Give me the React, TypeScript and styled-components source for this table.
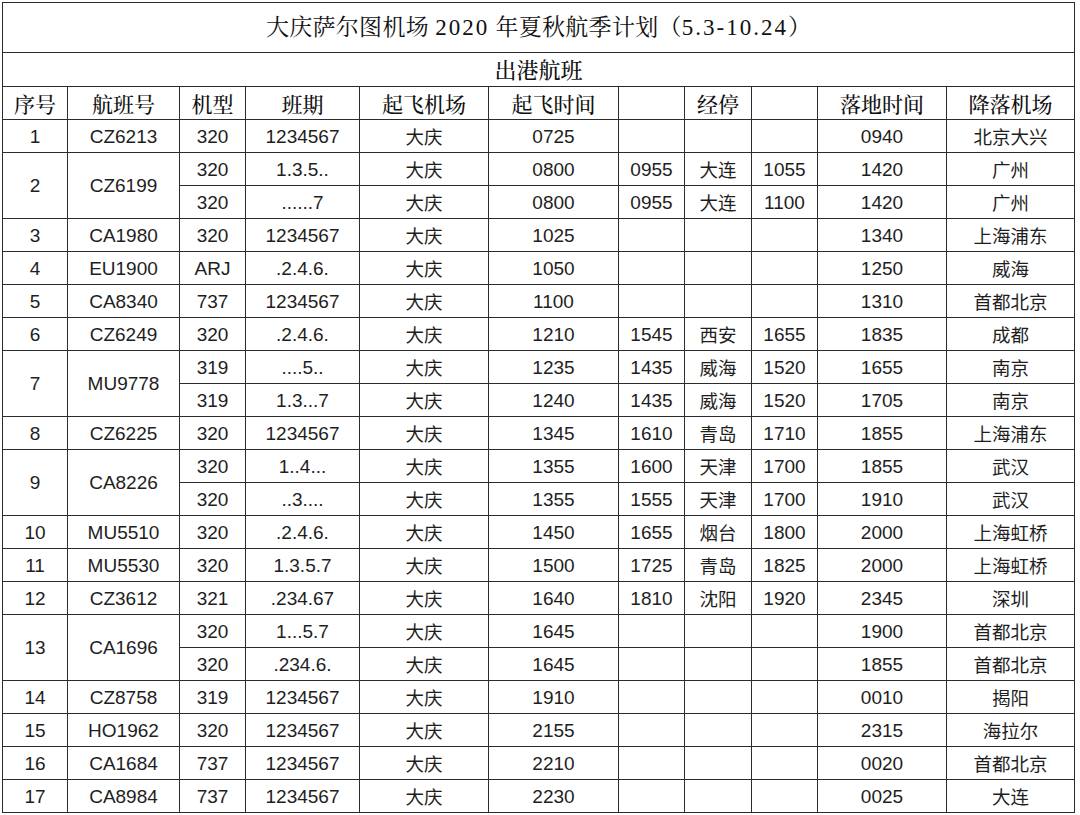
import * as React from 'react';
import styled, { createGlobalStyle } from 'styled-components';

type Leg = [string, string, string, string, string, string, string, string, string];

type Flight = {
  no: number;
  code: string;
  legs: Leg[];
};

const flights: Flight[] = [
  { no: 1, code: 'CZ6213', legs: [['320', '1234567', '大庆', '0725', '', '', '', '0940', '北京大兴']] },
  {
    no: 2,
    code: 'CZ6199',
    legs: [
      ['320', '1.3.5..', '大庆', '0800', '0955', '大连', '1055', '1420', '广州'],
      ['320', '......7', '大庆', '0800', '0955', '大连', '1100', '1420', '广州'],
    ],
  },
  { no: 3, code: 'CA1980', legs: [['320', '1234567', '大庆', '1025', '', '', '', '1340', '上海浦东']] },
  { no: 4, code: 'EU1900', legs: [['ARJ', '.2.4.6.', '大庆', '1050', '', '', '', '1250', '威海']] },
  { no: 5, code: 'CA8340', legs: [['737', '1234567', '大庆', '1100', '', '', '', '1310', '首都北京']] },
  { no: 6, code: 'CZ6249', legs: [['320', '.2.4.6.', '大庆', '1210', '1545', '西安', '1655', '1835', '成都']] },
  {
    no: 7,
    code: 'MU9778',
    legs: [
      ['319', '....5..', '大庆', '1235', '1435', '威海', '1520', '1655', '南京'],
      ['319', '1.3...7', '大庆', '1240', '1435', '威海', '1520', '1705', '南京'],
    ],
  },
  { no: 8, code: 'CZ6225', legs: [['320', '1234567', '大庆', '1345', '1610', '青岛', '1710', '1855', '上海浦东']] },
  {
    no: 9,
    code: 'CA8226',
    legs: [
      ['320', '1..4...', '大庆', '1355', '1600', '天津', '1700', '1855', '武汉'],
      ['320', '..3....', '大庆', '1355', '1555', '天津', '1700', '1910', '武汉'],
    ],
  },
  { no: 10, code: 'MU5510', legs: [['320', '.2.4.6.', '大庆', '1450', '1655', '烟台', '1800', '2000', '上海虹桥']] },
  { no: 11, code: 'MU5530', legs: [['320', '1.3.5.7', '大庆', '1500', '1725', '青岛', '1825', '2000', '上海虹桥']] },
  { no: 12, code: 'CZ3612', legs: [['321', '.234.67', '大庆', '1640', '1810', '沈阳', '1920', '2345', '深圳']] },
  {
    no: 13,
    code: 'CA1696',
    legs: [
      ['320', '1...5.7', '大庆', '1645', '', '', '', '1900', '首都北京'],
      ['320', '.234.6.', '大庆', '1645', '', '', '', '1855', '首都北京'],
    ],
  },
  { no: 14, code: 'CZ8758', legs: [['319', '1234567', '大庆', '1910', '', '', '', '0010', '揭阳']] },
  { no: 15, code: 'HO1962', legs: [['320', '1234567', '大庆', '2155', '', '', '', '2315', '海拉尔']] },
  { no: 16, code: 'CA1684', legs: [['737', '1234567', '大庆', '2210', '', '', '', '0020', '首都北京']] },
  { no: 17, code: 'CA8984', legs: [['737', '1234567', '大庆', '2230', '', '', '', '0025', '大连']] },
];

const columnWidths = [65, 112, 66, 114, 129, 130, 66, 67, 66, 129, 128];
const headings = ['序号', '航班号', '机型', '班期', '起飞机场', '起飞时间', '', '经停', '', '落地时间', '降落机场'];

const GlobalStyle = createGlobalStyle`
  html, body {
    margin: 0;
    padding: 0;
    background: #ffffff;
  }
  body {
    font-family: "Liberation Sans", "Noto Sans CJK SC", sans-serif;
  }
`;

const Page = styled.div`
  width: 1080px;
  height: 815px;
  padding: 2px 0 0 2px;
  box-sizing: border-box;
  overflow: hidden;
`;

const Sheet = styled.table`
  border-collapse: collapse;
  table-layout: fixed;
  width: 1073px;
  color: #1c1c1c;

  td,
  th {
    border: 1px solid #2b2b2b;
    padding: 0;
    text-align: center;
    vertical-align: middle;
    white-space: nowrap;
    overflow: hidden;
  }
`;

const TitleCell = styled.th`
  height: 44px;
  padding-bottom: 5px !important;
  font-family: "Noto Serif CJK SC", "Liberation Serif", "Noto Sans CJK SC", serif;
  font-size: 23px;
  font-weight: 400;
  color: #111;
  letter-spacing: 0.3px;
`;

const Numbers = styled.span`
  font-family: "Liberation Serif", serif;
  letter-spacing: 2px;
`;

const SectionCell = styled.th`
  height: 29px;
  padding-bottom: 2px !important;
  font-family: "Noto Serif CJK SC", "Noto Sans CJK SC", serif;
  font-size: 22px;
  font-weight: 500;
  color: #111;
`;

const HeadCell = styled.th`
  height: 32px;
  font-family: "Noto Serif CJK SC", "Noto Sans CJK SC", serif;
  font-size: 21px;
  font-weight: 500;
  color: #111;
`;

const Cell = styled.td<{ $cjk?: boolean }>`
  height: 32px;
  font-family: ${(p) =>
    p.$cjk ? '"Noto Sans CJK SC", sans-serif' : '"Liberation Sans", "Noto Sans CJK SC", sans-serif'};
  font-size: ${(p) => (p.$cjk ? '18.5px' : '19px')};
  line-height: 1;
  color: #1e1e1e;
`;

const hasCjk = (text: string) => /[\u4e00-\u9fff]/.test(text);

export default function App() {
  return (
    <>
      <GlobalStyle />
      <Page>
        <Sheet>
          <colgroup>
            {columnWidths.map((w, i) => (
              <col key={i} style={{ width: w }} />
            ))}
          </colgroup>
          <thead>
            <tr>
              <TitleCell colSpan={11}>
                大庆萨尔图机场 <Numbers>2020</Numbers> 年夏秋航季计划（<Numbers>5.3-10.24</Numbers>）
              </TitleCell>
            </tr>
            <tr>
              <SectionCell colSpan={11}>出港航班</SectionCell>
            </tr>
            <tr>
              {headings.map((h, i) => (
                <HeadCell key={i}>{h}</HeadCell>
              ))}
            </tr>
          </thead>
          <tbody>
            {flights.map((f) =>
              f.legs.map((leg, li) => (
                <tr key={`${f.no}-${li}`}>
                  {li === 0 && (
                    <>
                      <Cell rowSpan={f.legs.length}>{f.no}</Cell>
                      <Cell rowSpan={f.legs.length}>{f.code}</Cell>
                    </>
                  )}
                  {leg.map((v, ci) => (
                    <Cell key={ci} $cjk={hasCjk(v)}>
                      {v}
                    </Cell>
                  ))}
                </tr>
              ))
            )}
          </tbody>
        </Sheet>
      </Page>
    </>
  );
}
